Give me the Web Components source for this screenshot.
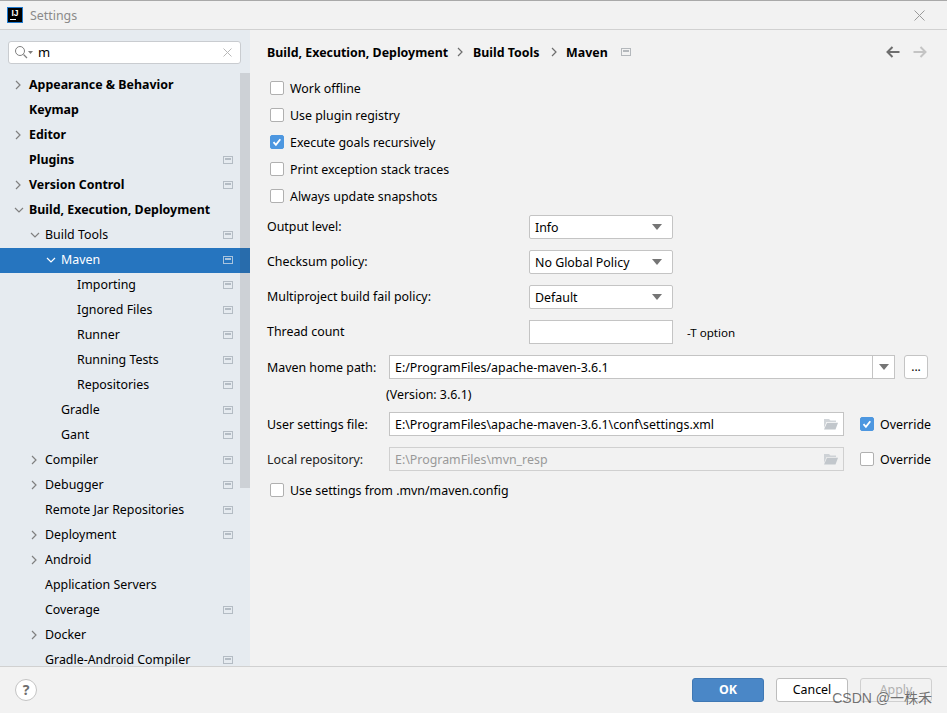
<!DOCTYPE html>
<html>
<head>
<meta charset="utf-8">
<title>Settings</title>
<style>
  html, body { margin: 0; height: 100%; overflow: hidden; }
  body { font: 12.4px "Noto Sans", "Noto Sans CJK SC", sans-serif; color: #000; background: #f2f2f2; }
</style>
</head>
<body>
<settings-dialog></settings-dialog>

<script>
const ICON_PROJECT = `<svg width="10" height="8" viewBox="0 0 10 8"><rect x=".5" y=".5" width="9" height="7" fill="none" stroke="currentColor"/><rect x="2" y="2" width="6" height="2" fill="currentColor"/></svg>`;
const ICON_FOLDER = `<svg width="15" height="12" viewBox="0 0 15 12"><path d="M1 1h5l1.5 1.5H13V4H3.5L1 10z" fill="currentColor" opacity=".75"/><path d="M4 4.8h11L12.5 11.5H1z" fill="currentColor"/></svg>`;
const CHEVRON_RIGHT = `<svg width="8" height="10" viewBox="0 0 8 10"><path d="M2 1l4 4-4 4" fill="none" stroke="currentColor" stroke-width="1.2"/></svg>`;
const CHEVRON_DOWN = `<svg width="10" height="8" viewBox="0 0 10 8"><path d="M1 2l4 4 4-4" fill="none" stroke="currentColor" stroke-width="1.2"/></svg>`;

class TitleBar extends HTMLElement {
  constructor() {
    super();
    this.attachShadow({ mode: 'open' }).innerHTML = `
      <style>
        :host { display: flex; align-items: center; height: 28px; padding: 0 22px 0 7px; background: #f2f2f2;
                border-top: 1px solid #a9a9a9; border-bottom: 1px solid #d1d1d1; color: #8a8a8a; flex: none; }
        .logo { width: 14px; height: 14px; background: #000; border: 1px solid #1f7ad0; margin-right: 7px; position: relative;
                color: #fff; font: bold 8.5px/10px "Liberation Sans", sans-serif; text-align: center; flex: none; }
        .logo i { position: absolute; left: 2px; bottom: 2px; width: 6px; height: 1px; background: #fff; }
        .name { flex: 1; }
      </style>
      <div class="logo">IJ<i></i></div>
      <div class="name">Settings</div>
      <svg width="11" height="11" viewBox="0 0 11 11"><path d="M.5.5l10 10M10.5.5l-10 10" stroke="#9a9a9a" fill="none"/></svg>`;
  }
}

class SearchBox extends HTMLElement {
  constructor() {
    super();
    this.attachShadow({ mode: 'open' }).innerHTML = `
      <style>
        :host { display: flex; align-items: center; height: 21px; margin: 11px 9px 9px 8px; padding: 0 8px 0 5px; background: #fff;
                border: 1px solid #c9ccd0; border-radius: 3px; flex: none; }
        .m { display: flex; width: 24px; }
        .v { flex: 1; font-size: 13px; line-height: 19px; }
      </style>
      <div class="m"><svg width="20" height="15" viewBox="0 0 20 15"><circle cx="6" cy="6" r="4.5" fill="none" stroke="#7f7f7f"/><path d="M9.5 9.5l3.5 3.5" stroke="#7f7f7f" stroke-width="1.3"/><path d="M14 6h5l-2.5 3z" fill="#7f7f7f"/></svg></div>
      <div class="v"><slot></slot></div>
      <svg width="9" height="9" viewBox="0 0 9 9"><path d="M.5.5l8 8M8.5.5l-8 8" stroke="#b8b8b8" fill="none"/></svg>`;
  }
}

class TreeItem extends HTMLElement {
  constructor() {
    super();
    const level = +(this.getAttribute('level') || 0);
    const arrow = this.getAttribute('arrow');
    const marks = { right: CHEVRON_RIGHT, down: CHEVRON_DOWN };
    this.attachShadow({ mode: 'open' }).innerHTML = `
      <style>
        :host { display: flex; align-items: center; height: 25px; box-sizing: border-box; padding: 0 17px 2px ${13 + 16 * level}px; color: #000; }
        :host([bold]) { font-weight: 700; }
        :host([selected]) { background: #2675bf; color: #fff; }
        .a { display: flex; width: 16px; padding-left: 1px; box-sizing: border-box; color: #808080; flex: none; }
        :host([selected]) .a { color: #fff; }
        .t { flex: 1; white-space: nowrap; }
        .g { display: flex; color: #b4bcc4; }
        :host([selected]) .g { color: #a9c4de; }
      </style>
      <span class="a">${marks[arrow] || ''}</span>
      <span class="t"><slot></slot></span>
      ${this.hasAttribute('project') ? `<span class="g">${ICON_PROJECT}</span>` : ''}`;
  }
}

class SideBar extends HTMLElement {
  constructor() {
    super();
    this.attachShadow({ mode: 'open' }).innerHTML = `
      <style>
        :host { display: flex; flex-direction: column; width: 250px; background: #e6ebf0; flex: none; position: relative; overflow: hidden; }
        .tree { flex: 1; overflow: hidden; }
        .thumb { position: absolute; right: 0; top: 43px; width: 10px; height: 415px; background: rgba(60,60,60,.14); }
      </style>
      <search-box>m</search-box>
      <div class="tree"><slot></slot></div>
      <div class="thumb"></div>`;
  }
}

class CheckBox extends HTMLElement {
  constructor() {
    super();
    this.attachShadow({ mode: 'open' }).innerHTML = `
      <style>
        :host { display: inline-flex; align-items: center; gap: 6px; white-space: nowrap; }
        .b { width: 14px; height: 14px; box-sizing: border-box; background: #fff; border: 1px solid #b0b0b0; border-radius: 2px; display: flex; flex: none; }
        :host([checked]) .b { background: #4d97e0; border-color: #4d97e0; }
        svg { display: none; }
        :host([checked]) svg { display: block; }
      </style>
      <span class="b"><svg width="12" height="12" viewBox="0 0 12 12"><path d="M2.5 6.2l2.4 2.6 4.4-5.6" fill="none" stroke="#fff" stroke-width="1.8"/></svg></span>
      <span><slot></slot></span>`;
  }
}

class ComboBox extends HTMLElement {
  constructor() {
    super();
    this.attachShadow({ mode: 'open' }).innerHTML = `
      <style>
        :host { display: flex; align-items: center; width: 144px; height: 24px; box-sizing: border-box; padding: 0 10px 0 5px;
                background: #fff; border: 1px solid #c4c4c4; border-radius: 2px; }
        span { flex: 1; }
        i { width: 0; height: 0; border: 5px solid transparent; border-top: 6px solid #757575; border-bottom: 0; }
      </style>
      <span><slot></slot></span><i></i>`;
  }
}

class TextField extends HTMLElement {
  constructor() {
    super();
    this.attachShadow({ mode: 'open' }).innerHTML = `
      <style>
        :host { display: flex; align-items: center; height: 24px; box-sizing: border-box; padding: 0 5px; background: #fff; border: 1px solid #c4c4c4; white-space: nowrap; }
        :host([disabled]) { background: #f2f2f2; color: #999; border-color: #d0d0d0; }
        span { flex: 1; }
        .f { display: flex; color: #c2c7cc; flex: none; }
        .drop { flex: none; align-self: stretch; width: 21px; margin-right: -5px; border-left: 1px solid #c4c4c4; display: flex; align-items: center; justify-content: center; }
        i { width: 0; height: 0; border: 5px solid transparent; border-top: 6px solid #757575; border-bottom: 0; }
      </style>
      <span><slot></slot></span>
      ${this.hasAttribute('browse') ? `<span class="f">${ICON_FOLDER}</span>` : ''}
      ${this.hasAttribute('drop') ? `<span class="drop"><i></i></span>` : ''}`;
  }
}

class MavenPage extends HTMLElement {
  constructor() {
    super();
    this.attachShadow({ mode: 'open' }).innerHTML = `
      <style>
        :host { display: block; flex: 1; min-width: 0; padding: 0 15px 0 17px; background: #f2f2f2; position: relative; }
        .crumbs { display: flex; align-items: center; height: 18px; margin-top: 13px; font-weight: 700; }
        .crumbs .s { color: #6e6e6e; margin: 0 8px; display: flex; }
        .crumbs .s.first { margin-right: 9px; }
        .crumbs .wide { width: 69px; white-space: nowrap; }
        .crumbs .g { color: #b4b8bc; display: flex; margin-left: 13px; font-weight: 400; }
        .nav { margin-left: auto; margin-right: 5px; display: flex; gap: 13px; }
        .checks { display: flex; flex-direction: column; gap: 9px; margin: 18px 0 0 3px; }
        .checks > * { height: 18px; }
        .combos { display: grid; grid-template-columns: 262px 144px 1fr; align-items: center; row-gap: 11px; margin-top: 10px; }
        .combos > span { padding-bottom: 1px; }
        .combos small { font-size: 11.6px; padding-left: 14px; }
        .paths { display: grid; grid-template-columns: 122px 455px 1fr; align-items: center; margin-top: 11px; }
        .home { display: flex; gap: 9px; grid-column: 2 / 4; }
        .home text-field { flex: 1; }
        .btn { width: 24px; height: 24px; box-sizing: border-box; background: #fff; border: 1px solid #c4c4c4; border-radius: 3px; text-align: center; line-height: 22px; margin-right: 4px; font-size: 12px; flex: none; }
        .ver { grid-column: 2 / 4; height: 18px; margin: 7px 0 8px -3px; }
        .dim { color: #222; }
        .paths check-box { padding-left: 16px; }
        .row2 { margin-top: 11px; }
        .last { margin: 10px 0 0 3px; display: flex; height: 18px; }
      </style>
      <div class="crumbs">
        <span>Build, Execution, Deployment</span><span class="s first">${CHEVRON_RIGHT}</span>
        <span class="wide">Build Tools</span><span class="s">${CHEVRON_RIGHT}</span>
        <span>Maven</span><span class="g">${ICON_PROJECT}</span>
        <span class="nav">
          <svg width="14" height="12" viewBox="0 0 14 12"><path d="M13.5 6H2M6.5 1L1.5 6l5 5" fill="none" stroke="#6e6e6e" stroke-width="2"/></svg>
          <svg width="14" height="12" viewBox="0 0 14 12"><path d="M.5 6H12M7.5 1l5 5-5 5" fill="none" stroke="#c4c4c4" stroke-width="2"/></svg>
        </span>
      </div>
      <div class="checks">
        <check-box>Work offline</check-box>
        <check-box>Use plugin registry</check-box>
        <check-box checked>Execute goals recursively</check-box>
        <check-box>Print exception stack traces</check-box>
        <check-box>Always update snapshots</check-box>
      </div>
      <div class="combos">
        <span>Output level:</span><combo-box>Info</combo-box><span></span>
        <span>Checksum policy:</span><combo-box>No Global Policy</combo-box><span></span>
        <span>Multiproject build fail policy:</span><combo-box>Default</combo-box><span></span>
        <span>Thread count</span><text-field></text-field><small>-T option</small>
      </div>
      <div class="paths">
        <span>Maven home path:</span>
        <div class="home"><text-field drop>E:/ProgramFiles/apache-maven-3.6.1</text-field><div class="btn">...</div></div>
        <span></span><div class="ver">(Version: 3.6.1)</div>
        <span>User settings file:</span><text-field browse>E:\\ProgramFiles\\apache-maven-3.6.1\\conf\\settings.xml</text-field><check-box checked>Override</check-box>
        <span class="dim row2">Local repository:</span><text-field class="row2" browse disabled>E:\\ProgramFiles\\mvn_resp</text-field><check-box class="row2">Override</check-box>
      </div>
      <check-box class="last">Use settings from .mvn/maven.config</check-box>`;
  }
}

class DialogFooter extends HTMLElement {
  constructor() {
    super();
    this.attachShadow({ mode: 'open' }).innerHTML = `
      <style>
        :host { display: flex; align-items: center; height: 46px; padding: 0 15px; background: #f2f2f2; border-top: 1px solid #d1d1d1; flex: none; position: relative; }
        .help { width: 22px; height: 22px; box-sizing: border-box; border: 1px solid #c4c4c4; border-radius: 50%; background: #fff; text-align: center; line-height: 20px; font-weight: 700; font-size: 14px; color: #6e6e6e; margin-right: auto; }
        .b { width: 72px; height: 24px; box-sizing: border-box; margin-left: 12px; border: 1px solid #bdbdbd; border-radius: 3px; background: #fff; text-align: center; line-height: 22px; }
        .ok { background: #4a87c7; border-color: #3f78b4; color: #fff; font-weight: 700; }
        .off { background: #f2f2f2; border-color: #d0d0d0; color: #b0b0b0; }
        .mark { position: absolute; right: 15px; top: 20px; font: 14px "Liberation Sans", "Noto Sans CJK SC", sans-serif; color: rgba(70,70,70,.75); white-space: nowrap; }
      </style>
      <div class="help">?</div>
      <div class="b ok">OK</div>
      <div class="b">Cancel</div>
      <div class="b off">Apply</div>
      <div class="mark">CSDN @一株禾</div>`;
  }
}

class SettingsDialog extends HTMLElement {
  constructor() {
    super();
    const rows = [
      [0, 'right', 1, 0, 'Appearance &amp; Behavior'],
      [0, '', 1, 0, 'Keymap'],
      [0, 'right', 1, 0, 'Editor'],
      [0, '', 1, 1, 'Plugins'],
      [0, 'right', 1, 1, 'Version Control'],
      [0, 'down', 1, 0, 'Build, Execution, Deployment'],
      [1, 'down', 0, 1, 'Build Tools'],
      [2, 'down', 0, 1, 'Maven', 1],
      [3, '', 0, 1, 'Importing'],
      [3, '', 0, 1, 'Ignored Files'],
      [3, '', 0, 1, 'Runner'],
      [3, '', 0, 1, 'Running Tests'],
      [3, '', 0, 1, 'Repositories'],
      [2, '', 0, 1, 'Gradle'],
      [2, '', 0, 1, 'Gant'],
      [1, 'right', 0, 1, 'Compiler'],
      [1, 'right', 0, 1, 'Debugger'],
      [1, '', 0, 1, 'Remote Jar Repositories'],
      [1, 'right', 0, 1, 'Deployment'],
      [1, 'right', 0, 0, 'Android'],
      [1, '', 0, 0, 'Application Servers'],
      [1, '', 0, 1, 'Coverage'],
      [1, 'right', 0, 0, 'Docker'],
      [1, '', 0, 1, 'Gradle-Android Compiler'],
    ];
    const items = rows.map(([level, arrow, bold, project, text, selected]) =>
      `<tree-item level="${level}" arrow="${arrow}"${bold ? ' bold' : ''}${project ? ' project' : ''}${selected ? ' selected' : ''}>${text}</tree-item>`).join('');
    this.attachShadow({ mode: 'open' }).innerHTML = `
      <style>
        :host { display: flex; flex-direction: column; height: 713px; overflow: hidden; }
        .body { display: flex; flex: 1; min-height: 0; }
      </style>
      <title-bar></title-bar>
      <div class="body">
        <side-bar>${items}</side-bar>
        <maven-page></maven-page>
      </div>
      <dialog-footer></dialog-footer>`;
  }
}

customElements.define('title-bar', TitleBar);
customElements.define('search-box', SearchBox);
customElements.define('tree-item', TreeItem);
customElements.define('side-bar', SideBar);
customElements.define('check-box', CheckBox);
customElements.define('combo-box', ComboBox);
customElements.define('text-field', TextField);
customElements.define('maven-page', MavenPage);
customElements.define('dialog-footer', DialogFooter);
customElements.define('settings-dialog', SettingsDialog);
</script>
</body>
</html>
